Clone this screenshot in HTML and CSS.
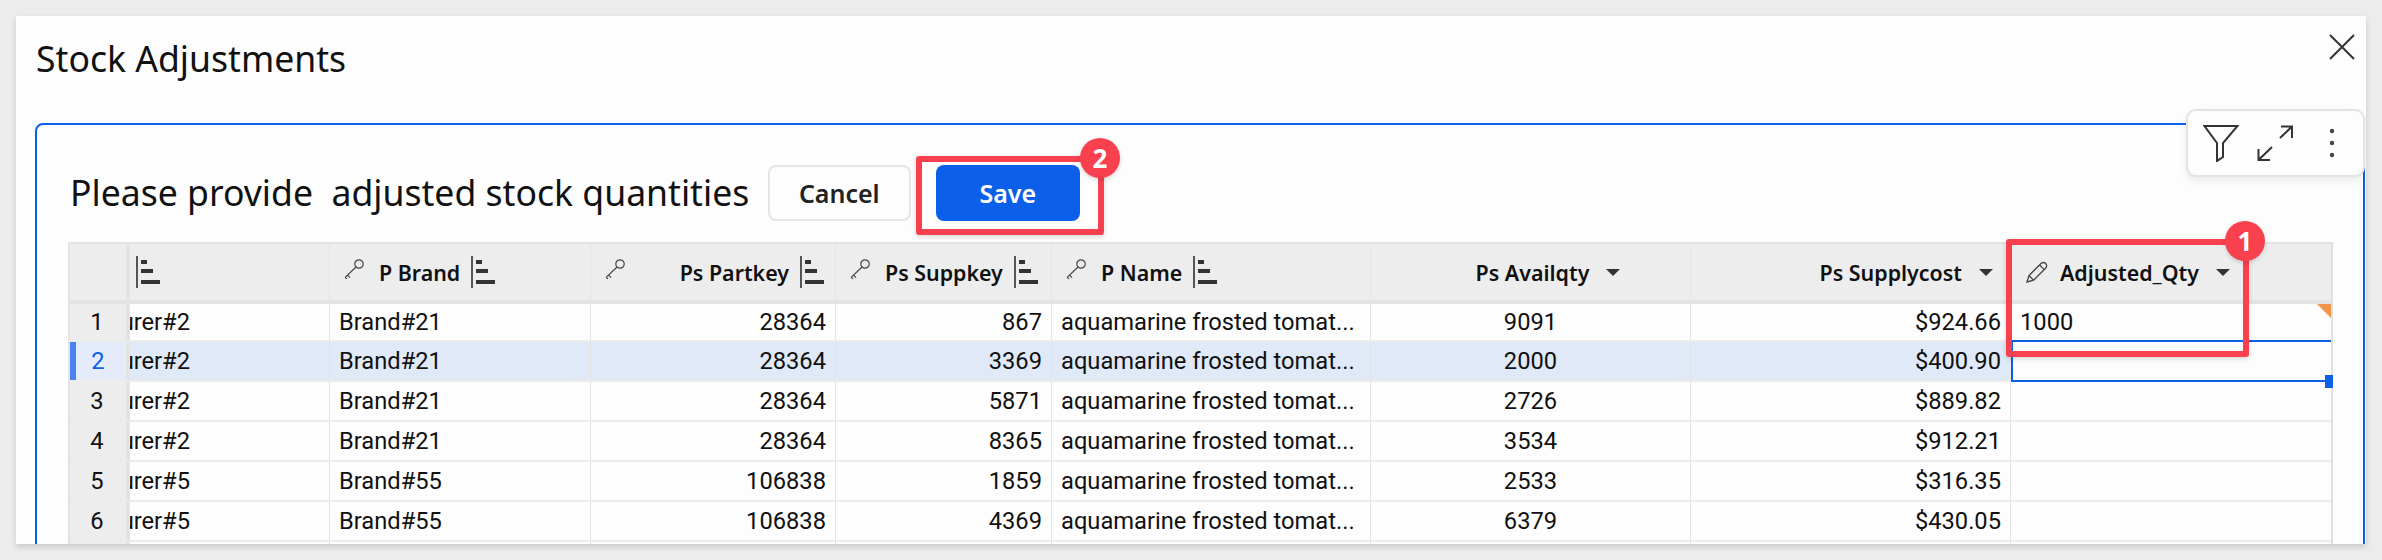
FILE: index.html
```html
<!DOCTYPE html>
<html lang="en">
<head>
  <meta charset="UTF-8" />
  <title>Stock Adjustments</title>
  <link rel="stylesheet" href="styles.css">
</head>
<body>
  <svg class="defs" width="0" height="0">
    <symbol id="key" viewBox="0 0 20 20">
      <circle cx="15" cy="5" r="4.2" fill="none" stroke="#444" stroke-width="1.2" />
      <path d="M12 8 L1.2 18.4 M3.6 16.2 L6 18.6 M1.2 18.4 L3 20" fill="none" stroke="#444" stroke-width="1.2" />
    </symbol>
    <symbol id="sort" viewBox="0 0 25 32">
      <rect x="0" y="0" width="2" height="32" fill="#555" />
      <rect x="5" y="4" width="6" height="4" fill="#333" />
      <rect x="5" y="13" width="12" height="4" fill="#333" />
      <rect x="5" y="24" width="19" height="4" fill="#333" />
    </symbol>
    <symbol id="pencil" viewBox="0 0 22 22">
      <path d="M1 21 L3 14.5 L15 2.5 Q17.5 0.5 19.8 2.6 Q21.6 5 19.6 7.2 L7.6 19.2 Z M3 14.5 L7.6 19.2 M13.6 4 L18.2 8.6" fill="none" stroke="#444" stroke-width="1.3" />
    </symbol>
  </svg>

  <div class="modal">
    <h1 class="modal-title">Stock Adjustments</h1>
    <svg class="close" width="26" height="26" viewBox="0 0 26 26">
      <path d="M1 1 L25 25 M25 1 L1 25" fill="none" stroke="#333" stroke-width="2" />
    </svg>

    <div class="frame">
      <div class="toolbar-head">
        <h2 class="form-title">Please provide  adjusted stock quantities</h2>
        <button class="btn btn-cancel">Cancel</button>
        <button class="btn btn-save">Save</button>
      </div>

      <div class="table">
        <div class="row row-head">
          <div class="cell num"></div>
          <div class="cell"><svg class="sort sort-only"><use href="#sort" /></svg></div>
          <div class="cell key-cell">
            <svg class="key"><use href="#key" /></svg>
            <span>P Brand</span>
            <svg class="sort"><use href="#sort" /></svg>
          </div>
          <div class="cell key-cell end tight">
            <svg class="key push"><use href="#key" /></svg>
            <span>Ps Partkey</span>
            <svg class="sort"><use href="#sort" /></svg>
          </div>
          <div class="cell key-cell">
            <svg class="key"><use href="#key" /></svg>
            <span>Ps Suppkey</span>
            <svg class="sort"><use href="#sort" /></svg>
          </div>
          <div class="cell key-cell">
            <svg class="key"><use href="#key" /></svg>
            <span>P Name</span>
            <svg class="sort"><use href="#sort" /></svg>
          </div>
          <div class="cell center"><span>Ps Availqty</span><i class="arrow arrow-out"></i></div>
          <div class="cell end"><span>Ps Supplycost</span><i class="arrow"></i></div>
          <div class="cell edit-head">
            <svg class="pencil"><use href="#pencil" /></svg>
            <span>Adjusted_Qty</span>
            <i class="arrow"></i>
          </div>
        </div>

        <div class="row row-first">
          <div class="cell num">1</div>
          <div class="cell clipped">Manufacturer#2</div>
          <div class="cell">Brand#21</div>
          <div class="cell end">28364</div>
          <div class="cell end">867</div>
          <div class="cell">aquamarine frosted tomat...</div>
          <div class="cell center">9091</div>
          <div class="cell end">$924.66</div>
          <div class="cell edited">1000</div>
        </div>
        <div class="row row-active">
          <div class="cell num">2</div>
          <div class="cell clipped">Manufacturer#2</div>
          <div class="cell">Brand#21</div>
          <div class="cell end">28364</div>
          <div class="cell end">3369</div>
          <div class="cell">aquamarine frosted tomat...</div>
          <div class="cell center">2000</div>
          <div class="cell end">$400.90</div>
          <div class="cell selected"><i class="handle"></i></div>
        </div>
        <div class="row">
          <div class="cell num">3</div>
          <div class="cell clipped">Manufacturer#2</div>
          <div class="cell">Brand#21</div>
          <div class="cell end">28364</div>
          <div class="cell end">5871</div>
          <div class="cell">aquamarine frosted tomat...</div>
          <div class="cell center">2726</div>
          <div class="cell end">$889.82</div>
          <div class="cell"></div>
        </div>
        <div class="row">
          <div class="cell num">4</div>
          <div class="cell clipped">Manufacturer#2</div>
          <div class="cell">Brand#21</div>
          <div class="cell end">28364</div>
          <div class="cell end">8365</div>
          <div class="cell">aquamarine frosted tomat...</div>
          <div class="cell center">3534</div>
          <div class="cell end">$912.21</div>
          <div class="cell"></div>
        </div>
        <div class="row">
          <div class="cell num">5</div>
          <div class="cell clipped">Manufacturer#5</div>
          <div class="cell">Brand#55</div>
          <div class="cell end">106838</div>
          <div class="cell end">1859</div>
          <div class="cell">aquamarine frosted tomat...</div>
          <div class="cell center">2533</div>
          <div class="cell end">$316.35</div>
          <div class="cell"></div>
        </div>
        <div class="row">
          <div class="cell num">6</div>
          <div class="cell clipped">Manufacturer#5</div>
          <div class="cell">Brand#55</div>
          <div class="cell end">106838</div>
          <div class="cell end">4369</div>
          <div class="cell">aquamarine frosted tomat...</div>
          <div class="cell center">6379</div>
          <div class="cell end">$430.05</div>
          <div class="cell"></div>
        </div>
        <div class="row">
          <div class="cell num"></div>
          <div class="cell"></div>
          <div class="cell"></div>
          <div class="cell"></div>
          <div class="cell"></div>
          <div class="cell"></div>
          <div class="cell"></div>
          <div class="cell"></div>
          <div class="cell"></div>
        </div>
      </div>
    </div>

    <div class="float-tools">
      <svg width="36" height="38" viewBox="0 0 36 38">
        <path d="M1.5 2 H34.5 L20 19 V33 L14 37 V19 Z" fill="none" stroke="#333" stroke-width="2" />
      </svg>
      <svg class="expand" width="37" height="37" viewBox="0 0 37 37">
        <path d="M23 13 L35 1.5 M24 1.5 H35 V13 M1.5 35 L15 22 M1.5 24 V35 H13" fill="none" stroke="#333" stroke-width="2" />
      </svg>
      <svg class="dots" width="6" height="30" viewBox="0 0 6 30">
        <circle cx="3" cy="3" r="2.2" fill="#444" />
        <circle cx="3" cy="15" r="2.2" fill="#444" />
        <circle cx="3" cy="27" r="2.2" fill="#444" />
      </svg>
    </div>

    <div class="callout callout-qty"><span class="badge">1</span></div>
    <div class="callout callout-save"><span class="badge">2</span></div>
  </div>
</body>
</html>
```

FILE: styles.css
```css
* { box-sizing: border-box; }
html, body { margin: 0; height: 560px; overflow: hidden; }
body { padding: 16px; background: #ececec; font-family: "Noto Sans", sans-serif; color: #111; }
.defs { position: absolute; }

.modal { position: relative; width: 2350px; height: 528px; padding-left: 19px; background: #fdfdfd; box-shadow: 0 3px 6px rgba(0,0,0,0.15); overflow: hidden; }
.modal-title { margin: 0; padding-left: 1px; height: 107px; padding-top: 21px; font-size: 35.6px; line-height: 42px; font-weight: 400; }
.close { position: absolute; top: 18px; right: 11px; }

.frame { height: 500px; padding: 40px 0 0 31px; margin-right: 1px; border: 2px solid #0b5fe8; border-radius: 8px 0 0 0; }
.toolbar-head { display: flex; align-items: center; height: 56px; margin-bottom: 21px; }
.form-title { margin: 0 18.5px 2px 2px; font-size: 35.6px; font-weight: 400; white-space: pre; }
.btn { height: 56px; font-family: inherit; font-size: 25px; font-weight: 600; border-radius: 8px; }
.btn-cancel { width: 143px; margin-right: 25px; background: #fdfdfd; color: #222; border: 2px solid #e5e5e5; }
.btn-save { width: 144px; background: #0b5fe8; color: #fff; border: none; }

.table { width: 2265px; border-top: 2px solid #e3e3e3; border-left: 2px solid #e3e3e3; border-right: 2px solid #e0e0e0; font-family: Roboto, sans-serif; font-size: 23.7px; }
.row { display: grid; grid-template-columns: 60px 200px 261px 245px 216px 319px 320px 320px 320px; height: 40px; border-bottom: 2px solid #ececec; }
.row-first { height: 38px; }
.cell { position: relative; display: flex; align-items: center; padding: 0 9px; border-right: 1px solid #e3e3e3; white-space: nowrap; overflow: hidden; }
.cell:last-child { border-right: none; }
.end { justify-content: flex-end; }
.center { justify-content: center; }
.num { justify-content: center; padding: 0 2px 0 0; background: #ededed; border-right: 4px solid #e3e3e3; }
.clipped { justify-content: flex-end; padding-right: 139px; }

.row-head { height: 60px; background: #ededed; border-bottom: 4px solid #e3e3e3; font-family: "Noto Sans", sans-serif; font-size: 21.4px; font-weight: 600; }
.row-head .cell { padding-left: 6px; }
.row-head .num { padding: 0; }
.row-head .end { padding-right: 17px; }
.row-head .tight { padding-right: 10px; }
.key-cell { padding-left: 14px !important; }
.key { width: 20px; height: 20px; margin: 0 15px 6px 0; flex: none; }
.push { margin-right: auto; }
.sort { width: 25px; height: 32px; margin-left: 11px; flex: none; }
.sort-only { margin-left: 0; }
.pencil { width: 22px; height: 22px; margin-right: 12px; flex: none; }
.edit-head { padding-left: 15px !important; }
.arrow { width: 0; height: 0; margin-left: 17px; border-left: 7px solid transparent; border-right: 7px solid transparent; border-top: 7px solid #333; flex: none; }
.arrow-out { margin-right: -38px; }

.row-active { background: #e0e9f8; }
.row-active .num { background: #e4ecfb; color: #0b5fe8; border-left: 6px solid #4c82f0; padding: 0 6px 0 0; }
.selected { margin: -2px 0; background: #fdfdfd; border: 2px solid #0b5fe8; overflow: visible; }
.handle { position: absolute; right: -2px; bottom: -8px; width: 8px; height: 13px; background: #0b5fe8; }
.edited::after { content: ""; position: absolute; top: 0; right: 0; border-top: 14px solid #f0954a; border-left: 14px solid transparent; }

.float-tools { position: absolute; top: 93px; right: 1px; display: flex; align-items: center; width: 179px; height: 68px; padding: 0 0 0 15px; background: #fdfdfd; border: 2px solid #e3e3e3; border-radius: 10px; box-shadow: 0 4px 8px rgba(0,0,0,0.08); }
.expand { margin-left: 18px; }
.dots { margin-left: 35px; }

.callout { position: absolute; border: 6px solid #f9404e; border-radius: 3px; box-shadow: 0 2px 5px rgba(0,0,0,0.15); }
.callout-qty { left: 1990px; top: 223px; width: 243px; height: 118px; }
.callout-save { left: 900px; top: 140px; width: 188px; height: 79px; }
.badge { position: absolute; top: -24px; right: -22px; width: 40px; height: 40px; border-radius: 50%; background: #f9404e; color: #fff; font-size: 26px; font-weight: 700; line-height: 40px; text-align: center; box-shadow: 0 2px 4px rgba(0,0,0,0.15); }
```
